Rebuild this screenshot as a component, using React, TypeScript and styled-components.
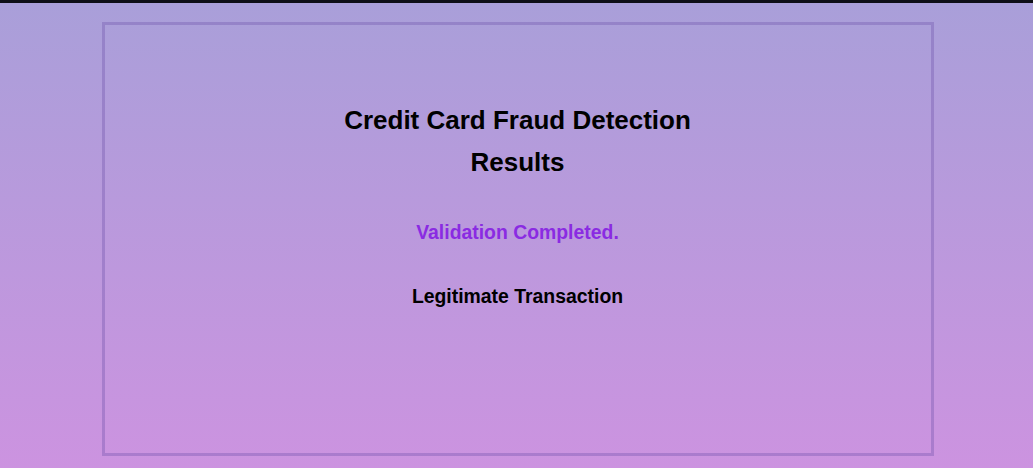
import React from "react";
import styled, { createGlobalStyle } from "styled-components";

const GlobalStyle = createGlobalStyle`
  html, body { margin: 0; padding: 0; height: 100%; }
  body {
    font-family: "Liberation Sans", Arial, sans-serif;
    background: linear-gradient(180deg, #a99fd9 0%, #cc93e0 100%);
    min-height: 468px;
  }
  #root { min-height: 468px; }
`;

const Page = styled.div`
  display: flex;
  flex-direction: column;
  min-height: 468px;
`;

const TopBar = styled.div`
  height: 3px;
  background: #0e0f17;
`;

const Main = styled.main`
  display: flex;
  justify-content: center;
  padding: 19px 0 12px 2px;
`;

const Card = styled.section`
  box-sizing: border-box;
  width: 832px;
  height: 434px;
  border: 3px solid rgba(110, 80, 170, 0.35);
  display: flex;
  flex-direction: column;
  align-items: center;
  padding-top: 74px;
`;

const Title = styled.h1`
  margin: 0;
  font-size: 26px;
  line-height: 42px;
  font-weight: 700;
  color: #000;
  text-align: center;
`;

const Status = styled.p<{ $tone: "accent" | "plain"; $gap: number }>`
  margin: ${(p) => p.$gap}px 0 0;
  font-size: 19.4px;
  line-height: 23px;
  font-weight: 700;
  text-align: center;
  color: ${(p) => (p.$tone === "accent" ? "#8a2be2" : "#000")};
`;

export default function App() {
  return (
    <>
      <GlobalStyle />
      <Page>
        <TopBar />
        <Main>
          <Card>
            <Title>
              Credit Card Fraud Detection
              <br />
              Results
            </Title>
            <Status $tone="accent" $gap={37.5}>Validation Completed.</Status>
            <Status $tone="plain" $gap={41}>Legitimate Transaction</Status>
          </Card>
        </Main>
      </Page>
    </>
  );
}
